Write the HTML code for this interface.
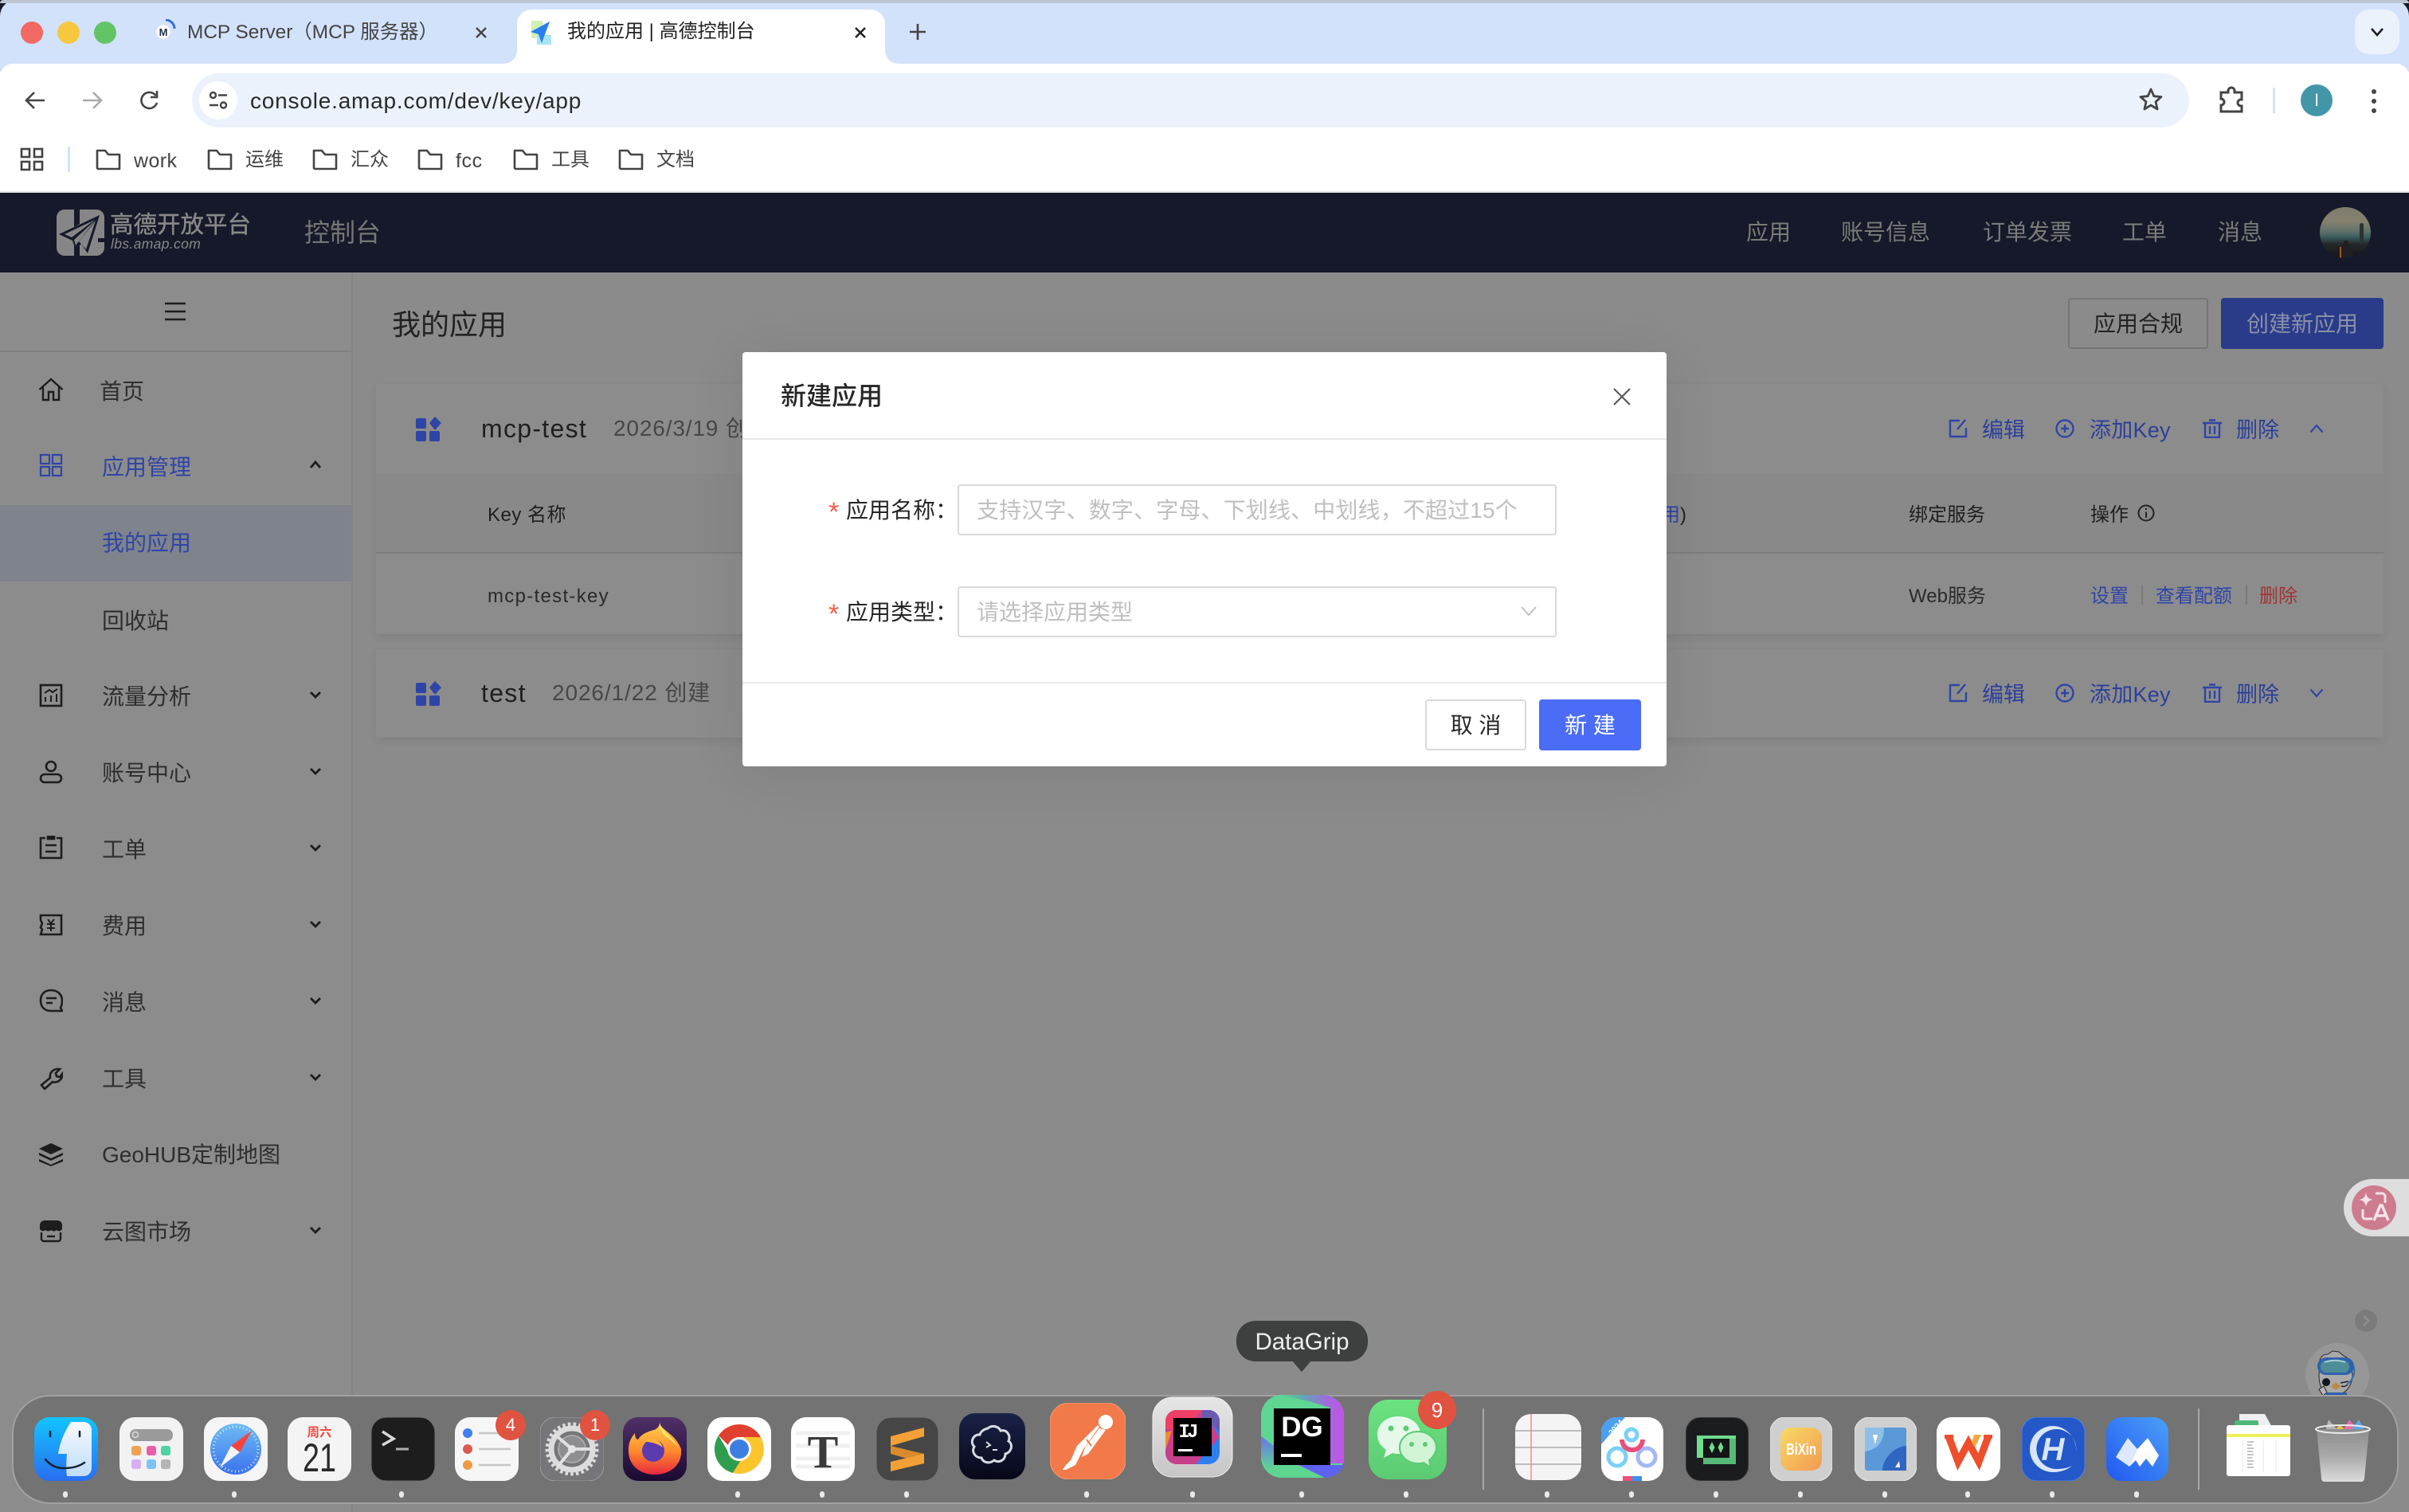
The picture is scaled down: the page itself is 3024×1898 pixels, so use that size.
<!DOCTYPE html>
<html lang="zh-CN"><head><meta charset="utf-8"><title>我的应用 | 高德控制台</title>
<style>
html,body{margin:0;padding:0;width:3024px;height:1898px;overflow:hidden;background:#8a8b8a;font-family:"Liberation Sans","Noto Sans CJK SC",sans-serif}
.a,.t,svg.i{position:absolute}
.t{white-space:nowrap;line-height:40px;height:40px;margin-top:2px}
.f28{font-size:28px}.f24{font-size:24px}
.m{color:#2e2e2e;font-size:28px;left:128px}
.b{color:#2c3f9a}
.act{font-size:27px;color:#2c3f9a}
.dot{position:absolute;top:1872px;width:6px;height:8px;border-radius:3px;background:#e8e8e8}
.badge{position:absolute;border-radius:50%;background:#e05340;color:#fff;text-align:center;z-index:3}
</style></head><body>

<!-- browser chrome -->
<div class="a" style="left:0;top:0;width:3024px;height:342px;background:#151929"></div>
<div class="a" style="left:0;top:80px;width:3024px;height:160px;background:#fff"></div>
<div class="a" style="left:0;top:0;width:3024px;height:90px;background:#d3e2fb;border-radius:20px 20px 0 0"></div>
<div class="a" style="left:0;top:0;width:3024px;height:4px;background:#bcc4d0;border-radius:20px 20px 0 0"></div>
<div class="a" style="left:0;top:80px;width:3024px;height:160px;background:#fff;border-radius:16px 16px 0 0"></div>
<div class="a" style="left:0;top:240px;width:3024px;height:2px;background:#e2e2e2"></div>
<div class="a" style="left:26px;top:27px;width:28px;height:28px;border-radius:50%;background:#f26a63"></div>
<div class="a" style="left:72px;top:27px;width:28px;height:28px;border-radius:50%;background:#f5c83f"></div>
<div class="a" style="left:118px;top:27px;width:28px;height:28px;border-radius:50%;background:#62c464"></div>

<!-- tab 1 -->
<svg class="i" style="left:194px;top:24px" width="28" height="28" viewBox="0 0 28 28"><path d="M14 1a11 11 0 0 1 11 11" fill="none" stroke="#3272d8" stroke-width="3"/><circle cx="11" cy="16" r="9" fill="#fff" stroke="#dfe5ee"/><text x="11" y="21" font-size="13" font-weight="700" text-anchor="middle" fill="#23314f">M</text></svg>
<div class="t" style="left:235px;top:19px;font-size:24.4px;color:#444">MCP Server（MCP 服务器）</div>
<svg class="i" style="left:594px;top:31px" width="20" height="20" viewBox="0 0 20 20"><path d="M4 4l12 12M16 4L4 16" stroke="#444" stroke-width="2.4"/></svg>

<!-- active tab -->
<div class="a" style="left:649px;top:12px;width:462px;height:70px;background:#fff;border-radius:18px 18px 0 0"></div>
<div class="a" style="left:633px;top:64px;width:16px;height:16px;background:radial-gradient(circle at 0 0,#d3e2fb 15.5px,#fff 16px)"></div>
<div class="a" style="left:1111px;top:64px;width:16px;height:16px;background:radial-gradient(circle at 100% 0,#d3e2fb 15.5px,#fff 16px)"></div>
<svg class="i" style="left:664px;top:24px" width="32" height="32" viewBox="0 0 32 32"><rect x="3" y="2" width="14" height="22" fill="#cdf2b4"/><rect x="10" y="20" width="18" height="12" fill="#a8e4f5"/><path d="M26 3L2 16l10 3 4 11z" fill="#2a7df0"/></svg>
<div class="t" style="left:712px;top:18px;font-size:24px;color:#222">我的应用 | 高德控制台</div>
<svg class="i" style="left:1070px;top:31px" width="20" height="20" viewBox="0 0 20 20"><path d="M4 4l12 12M16 4L4 16" stroke="#222" stroke-width="2.6"/></svg>
<svg class="i" style="left:1141px;top:29px" width="22" height="22" viewBox="0 0 22 22"><path d="M11 1v20M1 11h20" stroke="#444" stroke-width="2.6"/></svg>
<div class="a" style="left:2956px;top:12px;width:56px;height:56px;background:#ecf2fc;border-radius:18px"></div>
<svg class="i" style="left:2975px;top:33px" width="18" height="14" viewBox="0 0 18 14"><path d="M2 3l7 8 7-8" fill="none" stroke="#1e1e1e" stroke-width="2.6"/></svg>

<!-- toolbar -->
<svg class="i" style="left:30px;top:112px" width="28" height="28" viewBox="0 0 28 28"><path d="M26 14H4M13 4L3 14l10 10" fill="none" stroke="#444" stroke-width="2.6"/></svg>
<svg class="i" style="left:102px;top:112px" width="28" height="28" viewBox="0 0 28 28"><path d="M2 14h22M15 4l10 10-10 10" fill="none" stroke="#aaa" stroke-width="2.6"/></svg>
<svg class="i" style="left:174px;top:112px" width="28" height="28" viewBox="0 0 28 28"><path d="M23 17a10 10 0 1 1-1.500-9" fill="none" stroke="#444" stroke-width="2.600"/><path d="M23 2v8h-8" fill="none" stroke="#444" stroke-width="2.600"/></svg>
<div class="a" style="left:241px;top:92px;width:2507px;height:68px;border-radius:34px;background:#ecf2fb"></div>
<div class="a" style="left:250px;top:102px;width:48px;height:48px;border-radius:50%;background:#fff"></div>
<svg class="i" style="left:260px;top:112px" width="28" height="28" viewBox="0 0 28 28"><circle cx="7.500" cy="7.500" r="3.500" fill="none" stroke="#444" stroke-width="2.400"/><path d="M14 7.500h11M3 20h11" stroke="#444" stroke-width="2.400"/><circle cx="20.500" cy="20" r="3.500" fill="none" stroke="#444" stroke-width="2.400"/></svg>
<div class="t" style="left:314px;top:105px;font-size:28px;letter-spacing:.8px;color:#2a2a2a">console.amap.com/dev/key/app</div>
<svg class="i" style="left:2684px;top:109px" width="32" height="32" viewBox="0 0 32 32"><path d="M16 3l3.800 8.700 9.200.9-7 6.200 2.100 9.200-8.100-4.900-8.100 4.900 2.100-9.200-7-6.200 9.200-.9z" fill="none" stroke="#444" stroke-width="2.800" stroke-linejoin="round"/></svg>
<svg class="i" style="left:2784px;top:108px" width="34" height="34" viewBox="0 0 34 34"><path d="M3 8h9V6a4 4 0 0 1 8 0v2h9v9h-1a4 4 0 0 0 0 8h1v7H3v-8a4 4 0 0 0 0-8z" transform="translate(1 0)" fill="none" stroke="#444" stroke-width="3"/></svg>
<div class="a" style="left:2853px;top:110px;width:3px;height:32px;background:#d3e2fb"></div>
<div class="a" style="left:2888px;top:106px;width:40px;height:40px;border-radius:50%;background:#4396a8;color:#fff;text-align:center;font-size:22px;line-height:40px">I</div>
<div class="a" style="left:2977px;top:112px;width:6px;height:6px;border-radius:50%;background:#444;box-shadow:0 12px 0 #444,0 24px 0 #444"></div>

<!-- bookmarks -->
<svg class="i" style="left:25px;top:185px" width="30" height="30" viewBox="0 0 30 30" fill="none" stroke="#444" stroke-width="2.600"><rect x="2" y="2" width="10" height="10"/><rect x="18" y="2" width="10" height="10"/><rect x="2" y="18" width="10" height="10"/><rect x="18" y="18" width="10" height="10"/></svg>
<div class="a" style="left:85px;top:184px;width:3px;height:32px;background:#d3e2fb"></div>
<svg width="0" height="0" style="position:absolute"><defs><symbol id="fd" viewBox="0 0 32 28"><path d="M2 25V3h10l4 5h14v18H3z" fill="none" stroke="#444" stroke-width="2.600" stroke-linejoin="round"/></symbol></defs></svg>
<svg class="i" style="left:120px;top:186px" width="32" height="28"><use href="#fd"/></svg>
<div class="t" style="left:168px;top:180px;font-size:25px;letter-spacing:.4px;color:#444">work</div>
<svg class="i" style="left:260px;top:186px" width="32" height="28"><use href="#fd"/></svg>
<div class="t" style="left:308px;top:179px;font-size:24px;color:#444">运维</div>
<svg class="i" style="left:392px;top:186px" width="32" height="28"><use href="#fd"/></svg>
<div class="t" style="left:440px;top:179px;font-size:24px;color:#444">汇众</div>
<svg class="i" style="left:524px;top:186px" width="32" height="28"><use href="#fd"/></svg>
<div class="t" style="left:572px;top:180px;font-size:25px;letter-spacing:.6px;color:#444">fcc</div>
<svg class="i" style="left:644px;top:186px" width="32" height="28"><use href="#fd"/></svg>
<div class="t" style="left:692px;top:179px;font-size:24px;color:#444">工具</div>
<svg class="i" style="left:776px;top:186px" width="32" height="28"><use href="#fd"/></svg>
<div class="t" style="left:824px;top:179px;font-size:24px;color:#444">文档</div>

<!-- top nav -->
<svg class="i" style="left:71px;top:263px" width="60" height="58" viewBox="0 0 60 58"><rect width="60" height="58" rx="10" fill="#868686"/><path d="M22 0h7v18l-7 4zM22 46h7v12h-7zM52 36h8v5h-8z" fill="#151929"/><path d="M54 7L3 31l17 8 4 12 7-8 8 12z" fill="#151929"/><path d="M48 13L10 31l9 4zM48 14L22 38l2 7zM49 14L28 40l9 10z" fill="#868686"/></svg>
<div class="t" style="left:138px;top:261px;font-size:29.500px;color:#888;-webkit-text-stroke:.4px #888">高德开放平台</div>
<div class="t" style="left:139px;top:284px;font-size:17.500px;color:#888;font-style:italic;letter-spacing:.35px">lbs.amap.com</div>
<div class="t" style="left:382px;top:270px;font-size:32px;color:#767676">控制台</div>
<div class="t f28" style="left:2192px;top:270px;color:#7b7b7b">应用</div>
<div class="t f28" style="left:2311px;top:270px;color:#7b7b7b">账号信息</div>
<div class="t f28" style="left:2489px;top:270px;color:#7b7b7b">订单发票</div>
<div class="t f28" style="left:2664px;top:270px;color:#7b7b7b">工单</div>
<div class="t f28" style="left:2784px;top:270px;color:#7b7b7b">消息</div>
<div class="a" style="left:2912px;top:260px;width:64px;height:64px;border-radius:50%;overflow:hidden;background:linear-gradient(180deg,#7f7c6c 0%,#85806e 28%,#5e726c 48%,#37585a 60%,#26282c 72%,#141418 100%)"><div class="a" style="left:23px;top:42px;width:20px;height:22px;background:#1f1f24;clip-path:polygon(40% 0,60% 0,100% 100%,0 100%)"></div><div class="a" style="left:25px;top:50px;width:2px;height:14px;background:#a8551d"></div><div class="a" style="left:50px;top:20px;width:5px;height:24px;background:#2a3330;border-radius:3px"></div></div>

<!-- sidebar -->
<div class="a" style="left:0;top:342px;width:441px;height:1556px;background:#8c8c8c"></div>
<div class="a" style="left:441px;top:342px;width:2px;height:1556px;background:#858585"></div>
<div class="a" style="left:0;top:440px;width:441px;height:2px;background:#7f7f7f"></div>
<svg class="i" style="left:206px;top:379px" width="28" height="24" viewBox="0 0 28 24"><path d="M1 2h26M1 12h26M1 22h26" stroke="#1d1d1d" stroke-width="2.400"/></svg>
<div class="a" style="left:0;top:634px;width:441px;height:96px;background:#7f838c"></div>

<svg class="i" style="left:48px;top:474px" width="32" height="30" viewBox="0 0 32 30" fill="none" stroke="#1d1d1d" stroke-width="2.400"><path d="M1.500 15L16 2l14.500 13M6 12v16h7V18h6v10h7V12"/></svg>
<div class="t m" style="left:125px;top:470px">首页</div>
<svg class="i" style="left:49px;top:569px" width="30" height="30" viewBox="0 0 30 30" fill="none" stroke="#2f45a6" stroke-width="2.200"><rect x="2" y="2" width="11" height="11"/><rect x="17" y="2" width="11" height="11"/><rect x="2" y="17" width="11" height="11"/><rect x="17" y="17" width="11" height="11"/></svg>
<div class="t m b" style="top:565px;color:#2f45a6">应用管理</div>
<svg class="i" style="left:388px;top:577px" width="16" height="12" viewBox="0 0 16 12"><path d="M2 10l6-7 6 7" fill="none" stroke="#1d1d1d" stroke-width="2.800"/></svg>
<div class="t m b" style="top:660px;color:#2f45a6">我的应用</div>
<div class="t m" style="top:758px">回收站</div>

<svg class="i" style="left:49px;top:858px" width="30" height="30" viewBox="0 0 30 30" fill="none" stroke="#1d1d1d" stroke-width="2.600"><rect x="2" y="2" width="26" height="26"/><path d="M8 23v-6M15 23v-8M22 23v-10M7 12l6-4 4 3 6-4" stroke-width="2"/></svg>
<div class="t m" style="top:853px">流量分析</div>
<svg class="i" style="left:49px;top:954px" width="30" height="30" viewBox="0 0 30 30" fill="none" stroke="#1d1d1d" stroke-width="2.600"><circle cx="15" cy="8" r="6"/><rect x="2" y="18" width="26" height="10" rx="5"/></svg>
<div class="t m" style="top:949px">账号中心</div>
<svg class="i" style="left:49px;top:1049px" width="30" height="30" viewBox="0 0 30 30" fill="none" stroke="#1d1d1d" stroke-width="2.600"><path d="M8 3H2v25h26V3h-6M11 3h8" /><path d="M8 12h14M8 20h14"/><rect x="11" y="1" width="8" height="3" fill="#1d1d1d"/></svg>
<div class="t m" style="top:1045px">工单</div>
<svg class="i" style="left:49px;top:1146px" width="30" height="30" viewBox="0 0 30 30" fill="none" stroke="#1d1d1d" stroke-width="2.600"><path d="M2 3h26v24H2l2-6-2-3 2-5-2-4z"/><path d="M11 8l4 5 4-5M10 14h10M10 19h10M15 13v10" stroke-width="2"/></svg>
<div class="t m" style="top:1141px">费用</div>
<svg class="i" style="left:49px;top:1241px" width="30" height="30" viewBox="0 0 30 30" fill="none" stroke="#1d1d1d" stroke-width="2.600"><path d="M15 2C7 2 2 7 2 15s5 13 13 13h14l-2-4c1-2 2-5 2-9 0-8-6-13-14-13z"/><path d="M9 12h13M9 18h8"/></svg>
<div class="t m" style="top:1237px">消息</div>
<svg class="i" style="left:49px;top:1338px" width="30" height="30" viewBox="0 0 30 30" fill="none" stroke="#1d1d1d" stroke-width="2.600"><path d="M3 24L14 15c-1-6 3-12 12-11l-5 5 1 4 4 1 3-4c1 7-6 12-12 10L7 29z"/></svg>
<div class="t m" style="top:1333px">工具</div>
<svg class="i" style="left:47px;top:1434px" width="34" height="30" viewBox="0 0 34 30" fill="#1d1d1d"><path d="M17 1l15 7-15 7L2 8z"/><path d="M2 13l15 7 15-7v3l-15 7-15-7zM2 21l15 7 15-7v3l-15 6-15-6z"/></svg>
<div class="t m" style="top:1428px">GeoHUB定制地图</div>
<svg class="i" style="left:49px;top:1530px" width="30" height="30" viewBox="0 0 30 30"><path d="M7 2h16a6 6 0 0 1 6 6v5c-2 3-5 3-7 1-2 2-5 2-7 0-2 2-5 2-7 0-2 2-5 2-7-1V8a6 6 0 0 1 6-6z" fill="#1d1d1d"/><path d="M3 17v8a3 3 0 0 0 3 3h18a3 3 0 0 0 3-3v-8M10 22h10" fill="none" stroke="#1d1d1d" stroke-width="2.400"/></svg>
<div class="t m" style="top:1525px">云图市场</div>

<svg width="0" height="0" style="position:absolute"><defs><symbol id="cd" viewBox="0 0 16 12"><path d="M2 3l6 6 6-6" fill="none" stroke="#1d1d1d" stroke-width="2.800"/></symbol></defs></svg>
<svg class="i" style="left:388px;top:866px" width="16" height="12"><use href="#cd"/></svg>
<svg class="i" style="left:388px;top:962px" width="16" height="12"><use href="#cd"/></svg>
<svg class="i" style="left:388px;top:1058px" width="16" height="12"><use href="#cd"/></svg>
<svg class="i" style="left:388px;top:1154px" width="16" height="12"><use href="#cd"/></svg>
<svg class="i" style="left:388px;top:1250px" width="16" height="12"><use href="#cd"/></svg>
<svg class="i" style="left:388px;top:1346px" width="16" height="12"><use href="#cd"/></svg>
<svg class="i" style="left:388px;top:1538px" width="16" height="12"><use href="#cd"/></svg>

<!-- main header -->
<div class="t" style="left:492px;top:386px;font-size:36px;color:#222">我的应用</div>
<div class="a" style="left:2596px;top:374px;width:172px;height:60px;border:2px solid #767676;border-radius:4px;text-align:center;line-height:62px;font-size:28px;color:#222">应用合规</div>
<div class="a" style="left:2788px;top:374px;width:204px;height:64px;background:#2a3b8a;border-radius:4px;text-align:center;line-height:66px;font-size:28px;color:#8a90a8">创建新应用</div>

<!-- card 1 -->
<div class="a" style="left:472px;top:482px;width:2520px;height:314px;background:#8c8c8c;box-shadow:0 4px 10px rgba(0,0,0,.08)"></div>
<div class="a" style="left:472px;top:594px;width:2520px;height:101px;background:#898989;border-bottom:2px solid #7e7e7e;box-sizing:border-box"></div>
<svg width="0" height="0" style="position:absolute"><defs><symbol id="gr" viewBox="0 0 32 31" fill="#2f45a6"><rect x="0" y="2" width="13" height="13" rx="2"/><path d="M24 0l8 8-8 9-7-9z"/><rect x="0" y="18" width="13" height="13" rx="2"/><rect x="17" y="18" width="13" height="13" rx="2"/></symbol></defs></svg>
<svg class="i" style="left:522px;top:523px" width="32" height="31"><use href="#gr"/></svg>
<div class="t" style="left:604px;top:516px;font-size:32px;letter-spacing:1.300px;color:#1f1f1f">mcp-test</div>
<div class="t" style="left:770px;top:516px;font-size:28px;letter-spacing:.85px;color:#474747">2026/3/19 创建</div>
<div class="t f24" style="left:612px;top:625px;color:#1f1f1f;letter-spacing:.5px">Key 名称</div>
<div class="t f24" style="left:612px;top:727px;color:#2a2a2a;letter-spacing:1.300px">mcp-test-key</div>
<div class="t f24" style="left:2085px;top:625px;color:#2f45a6">用<span style="color:#222">)</span></div>
<div class="t f24" style="left:2396px;top:625px;color:#1f1f1f">绑定服务</div>
<div class="t f24" style="left:2624px;top:625px;color:#1f1f1f">操作</div>
<svg class="i" style="left:2683px;top:633px" width="22" height="22" viewBox="0 0 22 22" fill="none" stroke="#222" stroke-width="2"><circle cx="11" cy="11" r="9.500"/><path d="M11 9.500V17M11 5v2"/></svg>
<div class="t f24" style="left:2396px;top:727px;color:#2a2a2a">Web服务</div>
<div class="t f24" style="left:2624px;top:727px;color:#2f45a6">设置</div>
<div class="a" style="left:2688px;top:734px;width:2px;height:25px;background:#7a7a7a"></div>
<div class="t f24" style="left:2706px;top:727px;color:#2f45a6">查看配额</div>
<div class="a" style="left:2819px;top:734px;width:2px;height:25px;background:#7a7a7a"></div>
<div class="t f24" style="left:2836px;top:727px;color:#a03434">删除</div>

<!-- card 2 -->
<div class="a" style="left:472px;top:815px;width:2520px;height:111px;background:#8c8c8c;box-shadow:0 4px 10px rgba(0,0,0,.08)"></div>
<svg class="i" style="left:522px;top:855px" width="32" height="31"><use href="#gr"/></svg>
<div class="t" style="left:604px;top:848px;font-size:32px;letter-spacing:1.300px;color:#1f1f1f">test</div>
<div class="t" style="left:693px;top:848px;font-size:28px;letter-spacing:.9px;color:#474747">2026/1/22 创建</div>

<!-- card actions -->
<svg width="0" height="0" style="position:absolute"><defs>
<symbol id="ed" viewBox="0 0 24 24"><path d="M14 2H2v20h20V11M11 13L21 1" fill="none" stroke="#2f45a6" stroke-width="2.400"/></symbol>
<symbol id="ad" viewBox="0 0 24 24"><circle cx="12" cy="12" r="10.500" fill="none" stroke="#2f45a6" stroke-width="2.400"/><path d="M12 7v10M7 12h10" stroke="#2f45a6" stroke-width="2.400"/></symbol>
<symbol id="tr" viewBox="0 0 24 24"><path d="M0 5h24M8 1.500h8M3 5v18h18V5M9 9v10M15 9v10" fill="none" stroke="#2f45a6" stroke-width="2.400"/></symbol>
</defs></svg>
<svg class="i" style="left:2446px;top:526px" width="24" height="24"><use href="#ed"/></svg>
<div class="t act" style="left:2488px;top:518px">编辑</div>
<svg class="i" style="left:2580px;top:526px" width="24" height="24"><use href="#ad"/></svg>
<div class="t act" style="left:2623px;top:518px;letter-spacing:.25px">添加Key</div>
<svg class="i" style="left:2765px;top:526px" width="24" height="24"><use href="#tr"/></svg>
<div class="t act" style="left:2807px;top:518px">删除</div>
<svg class="i" style="left:2899px;top:532px" width="18" height="12" viewBox="0 0 18 12"><path d="M1.500 10.500L9 2l7.500 8.500" fill="none" stroke="#2f45a6" stroke-width="2.200"/></svg>
<svg class="i" style="left:2446px;top:858px" width="24" height="24"><use href="#ed"/></svg>
<div class="t act" style="left:2488px;top:850px">编辑</div>
<svg class="i" style="left:2580px;top:858px" width="24" height="24"><use href="#ad"/></svg>
<div class="t act" style="left:2623px;top:850px;letter-spacing:.25px">添加Key</div>
<svg class="i" style="left:2765px;top:858px" width="24" height="24"><use href="#tr"/></svg>
<div class="t act" style="left:2807px;top:850px">删除</div>
<svg class="i" style="left:2899px;top:864px" width="18" height="12" viewBox="0 0 18 12"><path d="M1.500 1.500L9 10l7.500-8.500" fill="none" stroke="#2f45a6" stroke-width="2.200"/></svg>

<!-- float widgets -->
<div class="a" style="left:2942px;top:1480px;width:82px;height:72px;background:#dedede;border-radius:36px 0 0 36px"></div>
<div class="a" style="left:2952px;top:1488px;width:56px;height:56px;border-radius:50%;background:#cd7c90"></div>
<svg class="i" style="left:2958px;top:1494px" width="44" height="44" viewBox="0 0 44 44"><path d="M12 3c1 6 3 8 9 9-6 1-8 3-9 9-1-6-3-8-9-9 6-1 8-3 9-9z" fill="#f3e4e8"/><path d="M24 4h8a4 4 0 0 1 4 4v8M8 24v9a3 3 0 0 0 3 3h9" fill="none" stroke="#f3e4e8" stroke-width="3"/><path d="M22 38l8-19h2l8 19M25 32h12" fill="none" stroke="#f3e4e8" stroke-width="3.500"/></svg>
<div class="a" style="left:2956px;top:1644px;width:28px;height:28px;border-radius:50%;background:#7a7b7a"></div>
<svg class="i" style="left:2964px;top:1650px" width="12" height="16" viewBox="0 0 12 16"><path d="M3 2l6 6-6 6" fill="none" stroke="#8f8f8f" stroke-width="2.600"/></svg>
<div class="a" style="left:2894px;top:1686px;width:80px;height:80px;border-radius:50%;background:#979797;overflow:hidden">
<svg class="a" style="left:0;top:0" width="80" height="80" viewBox="0 0 80 80"><path d="M18 22c1-6 6-8 10-8l6-4 8 1 6 5c6 2 9 8 10 14l1 10c0 14-10 26-24 26-10 0-18-8-18-26z" fill="#a9a9a9" stroke="#2a2a2a" stroke-width="1"/><rect x="15" y="18" width="46" height="22" rx="11" fill="#2f62ac"/><rect x="19" y="22" width="36" height="15" rx="7" fill="#4d8d98"/><path d="M24 24c8-3 18-3 26 0" stroke="#a8ccd0" stroke-width="2" fill="none"/><circle cx="26" cy="49" r="5" fill="#14141c"/><path d="M44 50l10-2M45 54c3 1 6 0 8-2" stroke="#222" stroke-width="1.500" fill="none"/><path d="M32 54l6-5 6 5-6 5z" fill="#bb8a48"/><path d="M17 58l6-4 4 8-5 4z" fill="#b5b5b5" stroke="#222"/><path d="M26 62h26v18H26z" fill="#2f5fa8"/><path d="M60 28c3 6 1 18-8 24" fill="none" stroke="#2f6cb8" stroke-width="2"/></svg></div>

<!-- modal -->
<div class="a" style="left:932px;top:442px;width:1160px;height:520px;background:#fff;border-radius:4px;box-shadow:0 8px 70px rgba(0,0,0,.09);z-index:1"></div>
<div style="position:absolute;left:0;top:0;z-index:2">
<div class="t" style="left:980px;top:475px;font-size:32px;font-weight:500;color:#262626">新建应用</div>
<svg class="i" style="left:2024px;top:486px" width="24" height="24" viewBox="0 0 24 24"><path d="M2 2l20 20M22 2L2 22" stroke="#5a5a5a" stroke-width="2.200"/></svg>
<div class="a" style="left:932px;top:550px;width:1160px;height:2px;background:#e8e8e8"></div>
<div class="t" style="left:1040px;top:621px;font-size:34px;color:#f5604a;width:16px">*</div>
<div class="t f28" style="left:1062px;top:619px;color:#262626">应用名称：</div>
<div class="a" style="left:1202px;top:608px;width:752px;height:64px;border:2px solid #d9d9d9;border-radius:4px;box-sizing:border-box"></div>
<div class="t f28" style="left:1226px;top:619px;color:#bfbfbf;letter-spacing:.15px">支持汉字、数字、字母、下划线、中划线，不超过15个</div>
<div class="t" style="left:1040px;top:749px;font-size:34px;color:#f5604a;width:16px">*</div>
<div class="t f28" style="left:1062px;top:747px;color:#262626">应用类型：</div>
<div class="a" style="left:1202px;top:736px;width:752px;height:64px;border:2px solid #d9d9d9;border-radius:4px;box-sizing:border-box"></div>
<div class="t f28" style="left:1226px;top:747px;color:#bfbfbf">请选择应用类型</div>
<svg class="i" style="left:1909px;top:760px" width="20" height="14" viewBox="0 0 20 14"><path d="M1 2l9 10 9-10" fill="none" stroke="#bfbfbf" stroke-width="2"/></svg>
<div class="a" style="left:932px;top:856px;width:1160px;height:2px;background:#e8e8e8"></div>
<div class="a" style="left:1789px;top:878px;width:127px;height:64px;border:2px solid #d9d9d9;border-radius:4px;box-sizing:border-box;text-align:center;line-height:62px;font-size:28px;color:#262626;white-space:pre">取 消</div>
<div class="a" style="left:1932px;top:878px;width:128px;height:64px;background:#4a6cf7;border-radius:4px;text-align:center;line-height:66px;font-size:28px;color:#fff;white-space:pre">新 建</div>
</div>

<!-- dock -->
<div class="a" style="left:15px;top:1751px;width:2992px;height:133px;background:#727372;border:2px solid #a0a1a0;border-radius:48px;z-index:3"></div>
<div id="dock" style="position:absolute;left:0;top:0;z-index:4">
<div class="a" style="left:1552px;top:1658px;width:165px;height:51px;background:#3e3f3f;border-radius:24px;color:#eee;font-size:29.500px;line-height:53px;text-align:center">DataGrip</div>
<svg class="i" style="left:1622px;top:1708px" width="24" height="14" viewBox="0 0 24 14"><path d="M0 0h24L13 13a1.500 1.500 0 0 1-2 0z" fill="#3e3f3f"/></svg>

<!-- finder -->
<svg class="i" style="left:43px;top:1779px" width="80" height="80" viewBox="0 0 80 80"><defs><linearGradient id="fa" x1="0" y1="0" x2="0" y2="1"><stop offset="0" stop-color="#12c4ff"/><stop offset="1" stop-color="#2a6ef0"/></linearGradient><linearGradient id="fb" x1="0" y1="0" x2="0" y2="1"><stop offset="0" stop-color="#f7fafe"/><stop offset="1" stop-color="#bfdcfb"/></linearGradient></defs><rect width="80" height="80" rx="19" fill="url(#fa)"/><path d="M46 6h16a10 10 0 0 1 10 10v48a10 10 0 0 1-10 10H41c-1-8-1-14 0-28H30c2-14 8-28 16-40z" fill="url(#fb)"/><path d="M14 53c7 8 14 11 23 11 10 0 19-2 26-7" fill="none" stroke="#122233" stroke-width="2.500" stroke-linecap="round"/><path d="M20 18v6M57 18v6" stroke="#122233" stroke-width="2.500" stroke-linecap="round"/></svg>
<!-- launchpad -->
<svg class="i" style="left:150px;top:1779px" width="80" height="80" viewBox="0 0 80 80"><rect width="80" height="80" rx="19" fill="#f2f2f2"/><rect x="13" y="15" width="54" height="15" rx="7" fill="#9a9a9a"/><circle cx="20" cy="22" r="3.500" fill="none" stroke="#ddd" stroke-width="1.500"/><rect x="15" y="36" width="12" height="12" rx="3" fill="#f0a055"/><rect x="34" y="36" width="12" height="12" rx="3" fill="#e860aa"/><rect x="52" y="36" width="12" height="12" rx="3" fill="#4fd3a5"/><rect x="15" y="53" width="12" height="12" rx="3" fill="#d5aef4"/><rect x="34" y="53" width="12" height="12" rx="3" fill="#7dc4f6"/><rect x="52" y="53" width="12" height="12" rx="3" fill="#b5b5b5"/></svg>
<!-- safari -->
<svg class="i" style="left:256px;top:1779px" width="80" height="80" viewBox="0 0 80 80"><defs><linearGradient id="sf" x1="0" y1="0" x2="0" y2="1"><stop offset="0" stop-color="#6ebcf5"/><stop offset="1" stop-color="#3a72ec"/></linearGradient></defs><rect width="80" height="80" rx="19" fill="#f5f5f5"/><circle cx="40" cy="40" r="32" fill="url(#sf)"/><circle cx="40" cy="40" r="28" fill="none" stroke="#d9ecfb" stroke-width="3" stroke-dasharray="1 3.400"/><path d="M60 17L34 36l11 8z" fill="#f6443c"/><path d="M20 63l14-27 11 8z" fill="#f4f4f4"/></svg>
<!-- calendar -->
<svg class="i" style="left:361px;top:1779px" width="80" height="80" viewBox="0 0 80 80"><rect width="80" height="80" rx="19" fill="#f4f4f4"/><text x="40" y="24" font-size="15.500" text-anchor="middle" fill="#ef4b44" font-weight="700">周六</text><text x="40" y="68" font-size="50" text-anchor="middle" fill="#2a2a2a" textLength="42" lengthAdjust="spacingAndGlyphs">21</text></svg>
<!-- terminal -->
<svg class="i" style="left:466px;top:1779px" width="80" height="80" viewBox="0 0 80 80"><rect width="80" height="80" rx="19" fill="#1d1d1d" stroke="#6d6d6d"/><path d="M14 18l14 9-14 8" fill="none" stroke="#d8d8d8" stroke-width="3.500"/><path d="M31 40h16" stroke="#b0b0b0" stroke-width="3"/></svg>
<!-- reminders -->
<svg class="i" style="left:571px;top:1779px" width="80" height="80" viewBox="0 0 80 80"><rect width="80" height="80" rx="19" fill="#f6f6f6"/><circle cx="16" cy="20" r="6" fill="#3f7ff0"/><circle cx="16" cy="40" r="6" fill="#dd5a50"/><circle cx="16" cy="60" r="6" fill="#ee9a40"/><path d="M30 20h40M30 40h40M30 60h40" stroke="#c6c6c6" stroke-width="2.500"/></svg>
<!-- settings -->
<svg class="i" style="left:678px;top:1779px" width="80" height="80" viewBox="0 0 80 80"><rect width="80" height="80" rx="19" fill="#75757a" stroke="#9c9c9c"/><circle cx="40" cy="40" r="26" fill="none" stroke="#dcdcdc" stroke-width="7"/><circle cx="40" cy="40" r="31" fill="none" stroke="#dcdcdc" stroke-width="5" stroke-dasharray="3.500 3.200"/><circle cx="40" cy="40" r="17" fill="#8e8e91" stroke="#a8a8a8" stroke-width="2"/><path d="M40 40L20 23M40 40h26M40 40L22 62" stroke="#e0e0e0" stroke-width="4"/><circle cx="40" cy="40" r="5" fill="#e4e4e4"/></svg>
<!-- firefox -->
<svg class="i" style="left:782px;top:1779px" width="80" height="80" viewBox="0 0 80 80"><defs><linearGradient id="fx" x1="0" y1="0" x2="0" y2="1"><stop offset="0" stop-color="#503068"/><stop offset="1" stop-color="#1a0a30"/></linearGradient><linearGradient id="fo" x1="0" y1="0" x2="0" y2="1"><stop offset="0" stop-color="#ffd34e"/><stop offset=".55" stop-color="#ff8a2c"/><stop offset="1" stop-color="#e8293e"/></linearGradient></defs><rect width="80" height="80" rx="19" fill="url(#fx)"/><path d="M46 6c0 10 20 14 27 34 2 20-14 32-33 32S6 60 7 40c0-8 3-14 8-20 0 6 2 8 4 8 4-7 12-10 20-12 5-2 7-5 7-10z" fill="url(#fo)"/><path d="M46 6c1 10 16 18 24 32-4-4-10-10-14-12-6-4-10-10-10-20z" fill="#ffe36a"/><circle cx="38" cy="42" r="14" fill="#5c3bb0"/><path d="M26 30c8-6 20-4 24 8-8-6-14-6-24-8z" fill="#ffb23c"/></svg>
<!-- chrome -->
<svg class="i" style="left:888px;top:1779px" width="80" height="80" viewBox="0 0 80 80"><rect width="80" height="80" rx="19" fill="#fff"/><path d="M40 9a31 31 0 0 1 27 16H40a15 15 0 0 0-14 10L14 23A31 31 0 0 1 40 9z" fill="#e0402f"/><path d="M14 23l13 22a15 15 0 0 0 15 10l-10 15A31 31 0 0 1 14 23z" fill="#2f9d4e"/><path d="M67 25a31 31 0 0 1-35 45l13-21a15 15 0 0 0 0-24z" fill="#fdc42b"/><circle cx="40" cy="40" r="15" fill="#fff"/><circle cx="40" cy="40" r="12" fill="#3d7fe0"/></svg>
<!-- T -->
<svg class="i" style="left:993px;top:1779px" width="80" height="80" viewBox="0 0 80 80"><rect width="80" height="80" rx="19" fill="#fff"/><path d="M6 20h68M6 36h68M6 52h68M6 62h68" stroke="#f0f0f0" stroke-width="5"/><text x="40" y="63" font-size="58" text-anchor="middle" font-family="Liberation Serif" font-weight="700" fill="#3a3a3a">T</text></svg>
<!-- sublime -->
<svg class="i" style="left:1100px;top:1779px" width="78" height="80" viewBox="0 0 78 80"><rect width="78" height="80" rx="19" fill="#464646" stroke="#777"/><path d="M60 13v11L18 36V24z" fill="#f3a037"/><path d="M18 36l42 10v12L18 46z" fill="#d98a2c"/><path d="M60 46v12L18 68V56z" fill="#f3a037"/></svg>
<!-- cloud -->
<svg class="i" style="left:1204px;top:1774px" width="83" height="83" viewBox="0 0 83 83"><defs><linearGradient id="wp" x1="0" y1="0" x2="0" y2="1"><stop offset="0" stop-color="#1a2248"/><stop offset="1" stop-color="#070818"/></linearGradient></defs><rect width="83" height="83" rx="20" fill="url(#wp)"/><path d="M36 19c6-5 14-2 16 3 8-2 13 6 10 13 6 4 4 14-4 16 0 8-8 12-14 8-6 5-14 3-16-3-8 0-13-8-9-14-6-6-1-16 7-15 1-4 5-7 10-8z" fill="none" stroke="#d8dce0" stroke-width="3"/><path d="M34 36l5 4-5 3M42 46h6" fill="none" stroke="#d8dce0" stroke-width="2"/></svg>
<!-- postman -->
<svg class="i" style="left:1318px;top:1761px" width="95" height="96" viewBox="0 0 95 96"><rect width="95" height="96" rx="24" fill="#f27a4a" stroke="#f59a72"/><circle cx="70" cy="24" r="9" fill="#fff"/><path d="M62 30L42 58 32 78l-12 6-4 0 4-6 6-6 8-18 8-8 14-14 4-4z" fill="#fff"/><path d="M70 34L48 64l-8 4 4-12 18-24z" fill="#fff"/><path d="M46 46l6 8" stroke="#f27a4a" stroke-width="2"/></svg>
<!-- IJ -->
<svg class="i" style="left:1446px;top:1753px" width="102" height="102" viewBox="0 0 102 102"><defs><linearGradient id="ig" x1="0" y1="0" x2="0" y2="1"><stop offset="0" stop-color="#e6e6e6"/><stop offset="1" stop-color="#c6c6c6"/></linearGradient></defs><rect x="1" y="1" width="100" height="100" rx="25" fill="url(#ig)" stroke="#f2f2f2"/><rect x="17" y="17" width="68" height="68" rx="14" fill="#2f7ff0"/><path d="M17 31a14 14 0 0 1 14-14h32l22 34-30 34H31a14 14 0 0 1-14-14z" fill="#c7408a"/><path d="M17 31a14 14 0 0 1 14-14h32L40 45 17 40z" fill="#ef3f66"/><path d="M17 45l8-2-8 24z" fill="#f38a2c"/><path d="M63 17h8a14 14 0 0 1 14 14v12L63 27z" fill="#6a5ab0"/><rect x="27" y="27" width="48" height="48" fill="#000"/><text x="46" y="51" font-size="24" font-weight="700" text-anchor="middle" fill="#fff" font-family="Liberation Mono" textLength="25" lengthAdjust="spacing">IJ</text><rect x="33" y="66" width="18" height="3" fill="#fff"/></svg>
<!-- DG -->
<svg class="i" style="left:1583px;top:1751px" width="104" height="104" viewBox="0 0 104 104"><defs><linearGradient id="dp" x1="0" y1="0" x2="1" y2="0"><stop offset="0" stop-color="#5fd592"/><stop offset=".35" stop-color="#5fa8b0"/><stop offset=".7" stop-color="#9a70d8"/><stop offset="1" stop-color="#c552e8"/></linearGradient><linearGradient id="dl" x1="0" y1="0" x2="0" y2="1"><stop offset="0" stop-color="#6a72e8"/><stop offset="1" stop-color="#5fd09a"/></linearGradient></defs><rect width="104" height="104" rx="26" fill="#5fd592"/><path d="M24 0h54a26 26 0 0 1 26 26v60H87V16L60 8z" fill="url(#dp)"/><path d="M0 52l16 12v24l-7 4C3 86 0 80 0 72z" fill="url(#dl)"/><path d="M47 88h57a26 26 0 0 1-24 16z" fill="#5f62ee"/><rect x="16" y="17" width="71" height="71" fill="#000"/><text x="51.500" y="52" font-size="35" font-weight="700" text-anchor="middle" fill="#fff">DG</text><rect x="25" y="74" width="26" height="4" fill="#fff"/></svg>
<!-- wechat -->
<svg class="i" style="left:1718px;top:1757px" width="98" height="100" viewBox="0 0 98 100"><defs><linearGradient id="wc" x1="0" y1="0" x2="0" y2="1"><stop offset="0" stop-color="#6be27f"/><stop offset="1" stop-color="#5ccb73"/></linearGradient></defs><rect width="98" height="100" rx="24" fill="url(#wc)"/><path d="M37 21c-15 0-26 10-26 23 0 8 4 14 11 19l-3 10 11-6c3 1 5 1 8 1 16 0 27-10 27-24S53 21 37 21z" fill="#e6f8e9"/><path d="M62 40c-13 0-23 9-23 20s10 20 23 20c3 0 5 0 7-1l9 6-2-9c5-4 9-10 9-16 0-11-10-20-23-20z" fill="#d2f4d6" stroke="#5ccb73" stroke-width="2"/><circle cx="28" cy="36" r="3.500" fill="#5ccb73"/><circle cx="47" cy="36" r="3.500" fill="#5ccb73"/><circle cx="54" cy="56" r="3" fill="#5ccb73"/><circle cx="71" cy="56" r="3" fill="#5ccb73"/></svg>
<div class="a" style="left:1861px;top:1768px;width:2px;height:102px;background:#a8a8a8"></div>
<!-- notes -->
<svg class="i" style="left:1902px;top:1775px" width="83" height="83" viewBox="0 0 83 83"><rect width="83" height="83" rx="20" fill="#f4f4f4"/><path d="M0 21h83M0 42h83M0 63h83" stroke="#bdbdbd" stroke-width="2"/><path d="M20 0v83" stroke="#ef8d8a" stroke-width="1.500"/></svg>
<!-- baidu -->
<svg class="i" style="left:2010px;top:1779px" width="78" height="80" viewBox="0 0 78 80"><rect width="78" height="80" rx="19" fill="#fff"/><path d="M0 34V19A19 19 0 0 1 19 0h11z" fill="#4a9ff0"/><text x="12" y="24" font-size="10" fill="#fff" transform="rotate(-48 12 22)" font-weight="700">2024</text><circle cx="20" cy="50" r="11" fill="none" stroke="#7ad0f8" stroke-width="5"/><circle cx="57" cy="50" r="11" fill="none" stroke="#a2b8f8" stroke-width="5"/><path d="M26 28a13 13 0 0 0 26 0" fill="none" stroke="#e84f7a" stroke-width="6"/><circle cx="38" cy="22" r="7" fill="none" stroke="#7ad0f8" stroke-width="5"/><rect x="27" y="74" width="12" height="6" fill="#f0506e"/><rect x="39" y="74" width="12" height="6" fill="#3f8ef0"/></svg>
<!-- green box -->
<svg class="i" style="left:2116px;top:1779px" width="79" height="80" viewBox="0 0 79 80"><rect width="79" height="80" rx="19" fill="#1b1c1d" stroke="#555"/><rect x="14" y="23" width="49" height="28" fill="#6fdc8e"/><rect x="22" y="51" width="41" height="8" fill="#58b878"/><rect x="55" y="23" width="8" height="35" fill="#58b878"/><rect x="14" y="23" width="49" height="4" fill="#6fdc8e"/><rect x="22" y="27" width="33" height="24" fill="#141516"/><path d="M33 31l3.500 7-3.500 7-3.500-7zM44 31l3.500 7-3.500 7-3.500-7z" fill="#6fdc8e"/></svg>
<!-- bixin -->
<svg class="i" style="left:2222px;top:1779px" width="78" height="80" viewBox="0 0 78 80"><defs><linearGradient id="bx" x1="0" y1="0" x2="1" y2="1"><stop offset="0" stop-color="#f8da64"/><stop offset="1" stop-color="#f29a52"/></linearGradient></defs><rect width="78" height="80" rx="19" fill="#cfcfcf" stroke="#e6e6e6"/><rect x="13" y="13" width="52" height="54" rx="13" fill="url(#bx)"/><text x="20" y="47" font-size="20" font-weight="700" fill="#fff" textLength="38" lengthAdjust="spacingAndGlyphs">BiXin</text></svg>
<!-- blue doc -->
<svg class="i" style="left:2328px;top:1779px" width="78" height="80" viewBox="0 0 78 80"><rect width="78" height="80" rx="19" fill="#cfcfcf" stroke="#e6e6e6"/><rect x="13" y="13" width="52" height="54" rx="3" fill="#5a98d8"/><path d="M13 13h24c0 20-10 28-24 30z" fill="#8dc0e8"/><path d="M65 36v31H35c0-14 14-30 30-31z" fill="#2f66c0"/><path d="M23 22h6l-3 12zM56 55l-5 8h6z" fill="#fff"/></svg>
<!-- wps -->
<svg class="i" style="left:2431px;top:1779px" width="80" height="80" viewBox="0 0 80 80"><rect width="80" height="80" rx="19" fill="#fff"/><path d="M15 24l12 32 13-24 13 24 12-32" fill="none" stroke="#ee4e2c" stroke-width="9" stroke-linejoin="miter"/><path d="M10 22h11v5H10zM59 22h11v5H59z" fill="#ee4e2c"/><path d="M47 22h9l-8 16-4-6z" fill="#f4a93a"/></svg>
<!-- H -->
<svg class="i" style="left:2538px;top:1779px" width="79" height="80" viewBox="0 0 79 80"><rect width="79" height="80" rx="19" fill="#2458c8" stroke="#4f83e0"/><path d="M39 11a29 29 0 1 0 0 58c10 0 18-3 24-8-6 3-12 4-20 4A25 25 0 1 1 68 44c2-14-10-33-29-33z" fill="#d8e6f8"/><text x="39" y="54" font-size="40" font-weight="700" font-style="italic" text-anchor="middle" fill="#d8e6f8">H</text></svg>
<!-- lanhu -->
<svg class="i" style="left:2644px;top:1779px" width="78" height="80" viewBox="0 0 78 80"><defs><linearGradient id="lh" x1="0" y1="1" x2="1" y2="0"><stop offset="0" stop-color="#2258f0"/><stop offset="1" stop-color="#4aa0f8"/></linearGradient></defs><rect width="78" height="80" rx="19" fill="url(#lh)"/><path d="M12 50l15-24 12 14-10 22z" fill="#dfe8fb"/><path d="M29 62l10-22 13-14 14 22-8 14-8-10-8 10-5-8z" fill="#fff"/></svg>
<div class="a" style="left:2759px;top:1768px;width:2px;height:102px;background:#a8a8a8"></div>
<!-- file -->
<svg class="i" style="left:2795px;top:1774px" width="80" height="80" viewBox="0 0 80 80"><path d="M16 1h32l10 18H16z" fill="#efefef"/><rect x="10" y="9" width="30" height="8" rx="2" fill="#4fb878"/><rect x="0" y="15" width="80" height="64" rx="3" fill="#fff"/><rect x="0" y="26" width="80" height="4" fill="#eef05a"/><path d="M20 34v40M46 34v40M62 34v40" stroke="#e6e6e6"/><path d="M26 36h8M26 40h6M26 44h8M26 48h7M26 52h8M26 56h6M26 60h8M26 64h7M26 68h8" stroke="#8a8a8a"/></svg>
<!-- trash -->
<svg class="i" style="left:2905px;top:1778px" width="72" height="82" viewBox="0 0 72 82"><defs><linearGradient id="tb" x1="0" y1="0" x2="0" y2="1"><stop offset="0" stop-color="#8e8e8e"/><stop offset=".5" stop-color="#a8a8a8"/><stop offset="1" stop-color="#dcdcdc"/></linearGradient></defs><path d="M14 18l4-14 12 14z" fill="#b5b5b5"/><path d="M26 18l6-8 8 8z" fill="#e8c24a"/><path d="M36 18l8-14 12 14z" fill="#e86fa8"/><path d="M46 18l10-14 8 14z" fill="#5ca8e8"/><path d="M3 16h66l-6 62a4 4 0 0 1-4 4H13a4 4 0 0 1-4-4z" fill="url(#tb)"/><ellipse cx="36" cy="16" rx="34" ry="5" fill="none" stroke="#ececec" stroke-width="2"/></svg>

<div class="badge" style="left:622px;top:1770px;width:38px;height:38px;font-size:22px;line-height:38px">4</div>
<div class="badge" style="left:728px;top:1770px;width:38px;height:38px;font-size:22px;line-height:38px">1</div>
<div class="badge" style="left:1780px;top:1746px;width:48px;height:48px;font-size:26px;line-height:48px">9</div>

<div class="dot" style="left:79px"></div><div class="dot" style="left:291px"></div><div class="dot" style="left:501px"></div><div class="dot" style="left:923px"></div><div class="dot" style="left:1029px"></div><div class="dot" style="left:1135px"></div><div class="dot" style="left:1361px"></div><div class="dot" style="left:1494px"></div><div class="dot" style="left:1631px"></div><div class="dot" style="left:1762px"></div><div class="dot" style="left:1939px"></div><div class="dot" style="left:2045px"></div><div class="dot" style="left:2151px"></div><div class="dot" style="left:2257px"></div><div class="dot" style="left:2363px"></div><div class="dot" style="left:2467px"></div><div class="dot" style="left:2573px"></div><div class="dot" style="left:2679px"></div>
</div>
</body></html>
